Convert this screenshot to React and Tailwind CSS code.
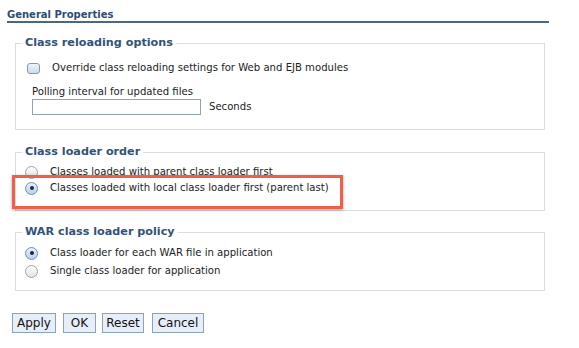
import { useState } from "react"

const FONT = "font-['DejaVu_Sans',Verdana,sans-serif]"

function Legend({ children }) {
  return (
    <legend className="-ml-[3px] px-[3px] text-[11.2px] leading-[16px] font-bold text-[#33527a]">
      {children}
    </legend>
  )
}

function Radio({ checked, label, onClick }) {
  return (
    <label className="flex items-center h-[14px] cursor-pointer" onClick={onClick}>
      <span
        className={`flex items-center justify-center w-[13px] h-[13px] rounded-full border ${
          checked
            ? "border-[#6f8fb8] bg-gradient-to-b from-[#e9f1fb] to-[#b9d0ec]"
            : "border-[#a3a3a3] bg-gradient-to-b from-[#ffffff] to-[#e2e2e2]"
        }`}
      >
        {checked && <span className="w-[4px] h-[4px] rounded-full bg-[#1c2a3c]" />}
      </span>
      <span className="ml-[12px] text-[10.1px] text-[#222]">{label}</span>
    </label>
  )
}

export default function App() {
  const [order, setOrder] = useState("local")
  const [policy, setPolicy] = useState("each")

  return (
    <div className={`relative w-[579px] h-[348px] bg-white pl-[7px] ${FONT}`}>
      {/* header */}
      <div className="pt-[8px] w-[542px] border-b-2 border-[#4a687f]">
        <div className="text-[10px] leading-[13px] font-bold text-[#2f4c70]">General Properties</div>
      </div>

      <div className="ml-[8px] w-[530px]">
        <fieldset className="mt-[12px] border border-[#dddddd] pl-[9px] pb-[14px]">
          <Legend>Class reloading options</Legend>
          <label className="mt-[10px] flex items-center h-[14px]">
            <span className="ml-[2px] w-[13px] h-[11px] rounded-[3px] border border-[#7f99bb] bg-gradient-to-b from-[#eef3fa] to-[#cddbee]" />
            <span className="ml-[12px] text-[10.1px] text-[#222]">
              Override class reloading settings for Web and EJB modules
            </span>
          </label>
          <div className="mt-[10px] pl-[7px]">
            <div className="text-[10.1px] leading-[13px] text-[#222]">Polling interval for updated files</div>
            <div className="flex items-center mt-[1px]">
              <input
                type="text"
                className="w-[169px] h-[16px] border border-[#8fa3b7] bg-white outline-none"
              />
              <span className="ml-[8px] text-[10.1px] text-[#222]">Seconds</span>
            </div>
          </div>
        </fieldset>

        <fieldset className="mt-[14px] border border-[#dddddd] pl-[9px] pb-[15px]">
          <Legend>Class loader order</Legend>
          <div className="mt-[5px] flex flex-col gap-[2px]">
            <Radio
              checked={order === "parent"}
              onClick={() => setOrder("parent")}
              label="Classes loaded with parent class loader first"
            />
            <Radio
              checked={order === "local"}
              onClick={() => setOrder("local")}
              label="Classes loaded with local class loader first (parent last)"
            />
          </div>
        </fieldset>

        <fieldset className="mt-[13px] border border-[#dddddd] pl-[9px] pb-[12px]">
          <Legend>WAR class loader policy</Legend>
          <div className="mt-[6px] flex flex-col gap-[4px]">
            <Radio
              checked={policy === "each"}
              onClick={() => setPolicy("each")}
              label="Class loader for each WAR file in application"
            />
            <Radio
              checked={policy === "single"}
              onClick={() => setPolicy("single")}
              label="Single class loader for application"
            />
          </div>
        </fieldset>
      </div>

      {/* buttons */}
      <div className="mt-[22px] ml-[5px] flex">
        {[
          ["Apply", "w-[44px]", ""],
          ["OK", "w-[33px]", "ml-[7px]"],
          ["Reset", "w-[42px]", "ml-[6px]"],
          ["Cancel", "w-[52px]", "ml-[8px]"],
        ].map(([label, w, ml]) => (
          <button
            key={label}
            className={`${w} ${ml} h-[20px] border border-[#8ea2b6] bg-[#e6eef9] text-[12px] leading-[18px] text-[#111]`}
          >
            {label}
          </button>
        ))}
      </div>

      {/* annotation highlight */}
      <div className="absolute left-[12px] top-[175px] w-[331px] h-[34px] border-[3px] border-[#ee5f4c] shadow-[0_1px_3px_rgba(0,0,0,0.35)] pointer-events-none" />
    </div>
  )
}
